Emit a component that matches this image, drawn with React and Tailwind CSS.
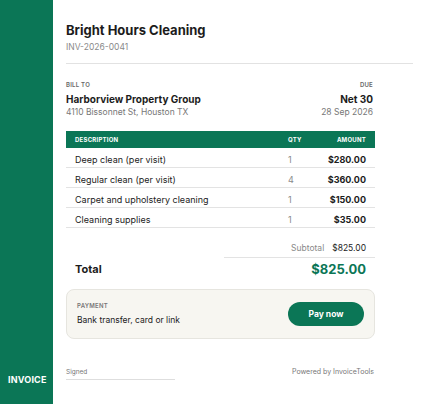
import React from 'react';

const items = [
  { desc: 'Deep clean (per visit)', qty: 1, amount: '$280.00' },
  { desc: 'Regular clean (per visit)', qty: 4, amount: '$360.00' },
  { desc: 'Carpet and upholstery cleaning', qty: 1, amount: '$150.00' },
  { desc: 'Cleaning supplies', qty: 1, amount: '$35.00' },
];

export default function App() {
  return (
    <div className="flex h-[404px] w-[440px] bg-white text-[#1c1c1c]" style={{ fontFamily: 'Inter, "Noto Sans", sans-serif' }}>
      {/* side band */}
      <aside className="flex w-[53px] shrink-0 flex-col justify-end bg-[#0b7656] pb-[18px]">
        <span className="pl-[8px] text-[9px] font-bold tracking-[0.02em] text-white">INVOICE</span>
      </aside>

      <main className="flex flex-1 flex-col pl-[13px] pr-[27px]">
        <header className="pt-[22px]">
          <h1 className="text-[13px] leading-[17px] font-bold">Bright Hours Cleaning</h1>
          <p className="mt-[2px] text-[8.5px] leading-[12px] text-[#8a8a8a]">INV-2026-0041</p>
          <div className="mt-[10px] h-px bg-[#e2e2e2]" />
        </header>

        <div className="w-[309px]">
          <section className="mt-[17px] flex justify-between">
            <div>
              <div className="text-[6px] leading-[8px] font-semibold tracking-[0.04em] text-[#666]">BILL TO</div>
              <div className="mt-[3px] text-[10px] leading-[14px] font-bold">Harborview Property Group</div>
              <div className="text-[8.5px] leading-[13px] text-[#777]">4110 Bissonnet St, Houston TX</div>
            </div>
            <div className="pr-[2px] text-right">
              <div className="text-[6px] leading-[8px] font-semibold tracking-[0.04em] text-[#666]">DUE</div>
              <div className="mt-[3px] text-[10px] leading-[14px] font-bold">Net 30</div>
              <div className="text-[8.5px] leading-[13px] text-[#777]">28 Sep 2026</div>
            </div>
          </section>

          <div className="mt-[12px] flex h-[17px] items-center bg-[#0b7656] px-[9px] text-[6px] font-bold tracking-[0.04em] text-white">
            <span className="flex-1">DESCRIPTION</span>
            <span className="w-[30px]">QTY</span>
            <span className="w-[48px] text-right">AMOUNT</span>
          </div>

          {items.map((it) => (
            <div key={it.desc} className="flex h-[20px] items-start border-b border-[#e3e3e3] px-[9px] pt-[6px] text-[9px] leading-[12px]">
              <span className="flex-1">{it.desc}</span>
              <span className="w-[30px] text-[#8a8a8a]">{it.qty}</span>
              <span className="w-[48px] text-right font-bold">{it.amount}</span>
            </div>
          ))}

          <div className="mt-[12px] ml-auto flex h-[18px] w-[151px] items-center justify-end gap-[8px] border-b border-[#e3e3e3] pr-[9px] text-[8.5px]">
            <span className="text-[#8a8a8a]">Subtotal</span>
            <span>$825.00</span>
          </div>

          <div className="flex h-[23px] items-center justify-between px-[9px]">
            <span className="text-[11px] font-bold">Total</span>
            <span className="text-[13px] font-bold text-[#0b7656]">$825.00</span>
          </div>

          <section className="mt-[8px] flex h-[50px] items-center justify-between rounded-[8px] border border-[#e6e5df] bg-[#f7f6f1] pl-[10px] pr-[10px]">
            <div>
              <div className="text-[6px] leading-[8px] font-semibold tracking-[0.04em] text-[#777]">PAYMENT</div>
              <div className="mt-[4px] text-[8.5px] leading-[12px]">Bank transfer, card or link</div>
            </div>
            <button className="h-[24px] w-[76px] rounded-full bg-[#0b7656] text-[8.5px] font-bold text-white">Pay now</button>
          </section>

          <footer className="mt-[28px] flex items-start justify-between">
            <div className="w-[109px] border-b border-[#dedede] pb-[2px] text-[6.5px] leading-[10px] text-[#777]">Signed</div>
            <div className="pr-[1px] text-[7px] leading-[10px] text-[#777]">Powered by InvoiceTools</div>
          </footer>
        </div>
      </main>
    </div>
  );
}
